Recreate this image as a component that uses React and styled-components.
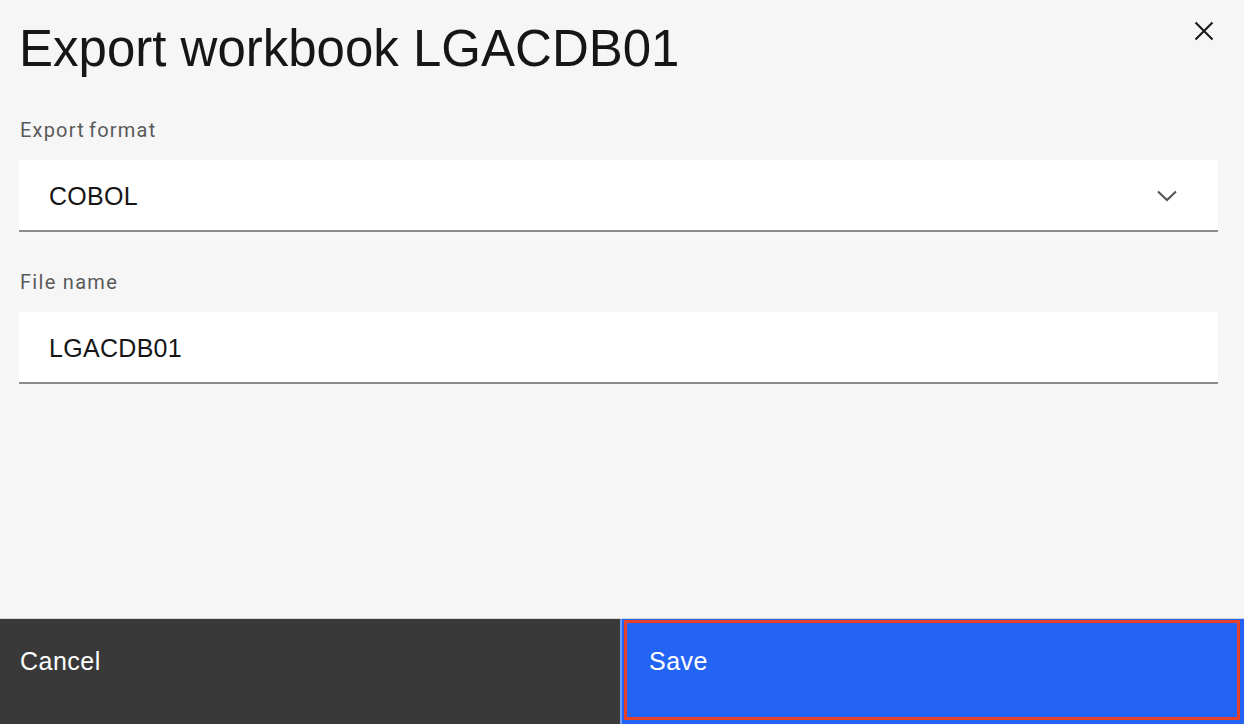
import React from "react";
import styled, { createGlobalStyle } from "styled-components";

const GlobalStyle = createGlobalStyle`
  html, body {
    margin: 0;
    padding: 0;
    background: #f6f6f6;
  }
  * {
    box-sizing: border-box;
  }
`;

export default function App() {
  return (
    <>
      <GlobalStyle />
      <Modal>
        <Header>
          <Title>Export workbook LGACDB01</Title>
          <CloseButton aria-label="Close">
            <svg width="20" height="20" viewBox="0 0 20 20" fill="none">
              <path d="M1.5 1.5 L18.5 18.5 M18.5 1.5 L1.5 18.5" stroke="#161616" strokeWidth="2" />
            </svg>
          </CloseButton>
        </Header>
        <Body>
          <Field>
            <Label>Export format</Label>
            <Control>
              <Value>COBOL</Value>
              <svg width="20" height="12" viewBox="0 0 20 12" fill="none">
                <path d="M1 1.5 L10 10 L19 1.5" stroke="#525252" strokeWidth="2" />
              </svg>
            </Control>
          </Field>
          <Field>
            <Label $wide>File name</Label>
            <Control>
              <Value>LGACDB01</Value>
            </Control>
          </Field>
        </Body>
        <Footer>
          <FooterButton $kind="secondary">Cancel</FooterButton>
          <FooterButton $kind="primary">Save</FooterButton>
        </Footer>
      </Modal>
    </>
  );
}

const Modal = styled.div`
  height: 724px;
  display: flex;
  flex-direction: column;
  background: #f6f6f6;
  font-family: "Liberation Sans", Arial, sans-serif;
`;
const Header = styled.div`
  display: flex;
  justify-content: space-between;
  align-items: flex-start;
  padding: 20px 30px 0 19px;
`;
const Title = styled.h1`
  margin: 0;
  font-size: 51px;
  font-weight: 400;
  line-height: 58px;
  color: #161616;
`;
const CloseButton = styled.button`
  border: none;
  background: none;
  padding: 0;
  margin-top: 1px;
  width: 20px;
  height: 20px;
  display: flex;
  cursor: pointer;
`;
const Body = styled.div`
  flex: 1;
  display: flex;
  flex-direction: column;
  gap: 40px;
  padding: 42px 26px 0 19px;
`;
const Field = styled.div`
  display: flex;
  flex-direction: column;
`;
const Label = styled.label`
  font-family: Roboto, "Liberation Sans", sans-serif;
  font-size: 20px;
  line-height: 20px;
  letter-spacing: ${(p) => (p.$wide ? "1.3px" : "1.2px")};
  word-spacing: ${(p) => (p.$wide ? "0" : "-2px")};
  color: #5a5a5a;
  margin-bottom: 20px;
  padding-left: 1px;
`;
const Control = styled.div`
  height: 72px;
  background: #fff;
  border-bottom: 2px solid #8d8d8d;
  display: flex;
  align-items: center;
  justify-content: space-between;
  padding: 2px 41px 0 30px;
`;
const Value = styled.span`
  font-size: 25px;
  letter-spacing: 0.3px;
  color: #161616;
`;
const Footer = styled.div`
  height: 106px;
  display: grid;
  grid-template-columns: 620px 1fr;
  border-top: 1px solid #d6d6d6;
`;
const FooterButton = styled.button`
  position: relative;
  border: none;
  margin: 0;
  text-align: left;
  display: flex;
  align-items: flex-start;
  padding: 28px 20px 0 ${(p) => (p.$kind === "primary" ? "27px" : "20px")};
  font-family: "Liberation Sans", Arial, sans-serif;
  font-size: 25px;
  letter-spacing: 0.5px;
  color: #fff;
  background: ${(p) => (p.$kind === "primary" ? "#2364f5" : "#393939")};
  border-left: ${(p) => (p.$kind === "primary" ? "2px solid #6f9cf8" : "none")};
  &::after {
    content: "";
    display: ${(p) => (p.$kind === "primary" ? "block" : "none")};
    position: absolute;
    top: 1px;
    left: 2px;
    right: 4px;
    bottom: 4px;
    border: 3px solid #e5412b;
  }
`;
